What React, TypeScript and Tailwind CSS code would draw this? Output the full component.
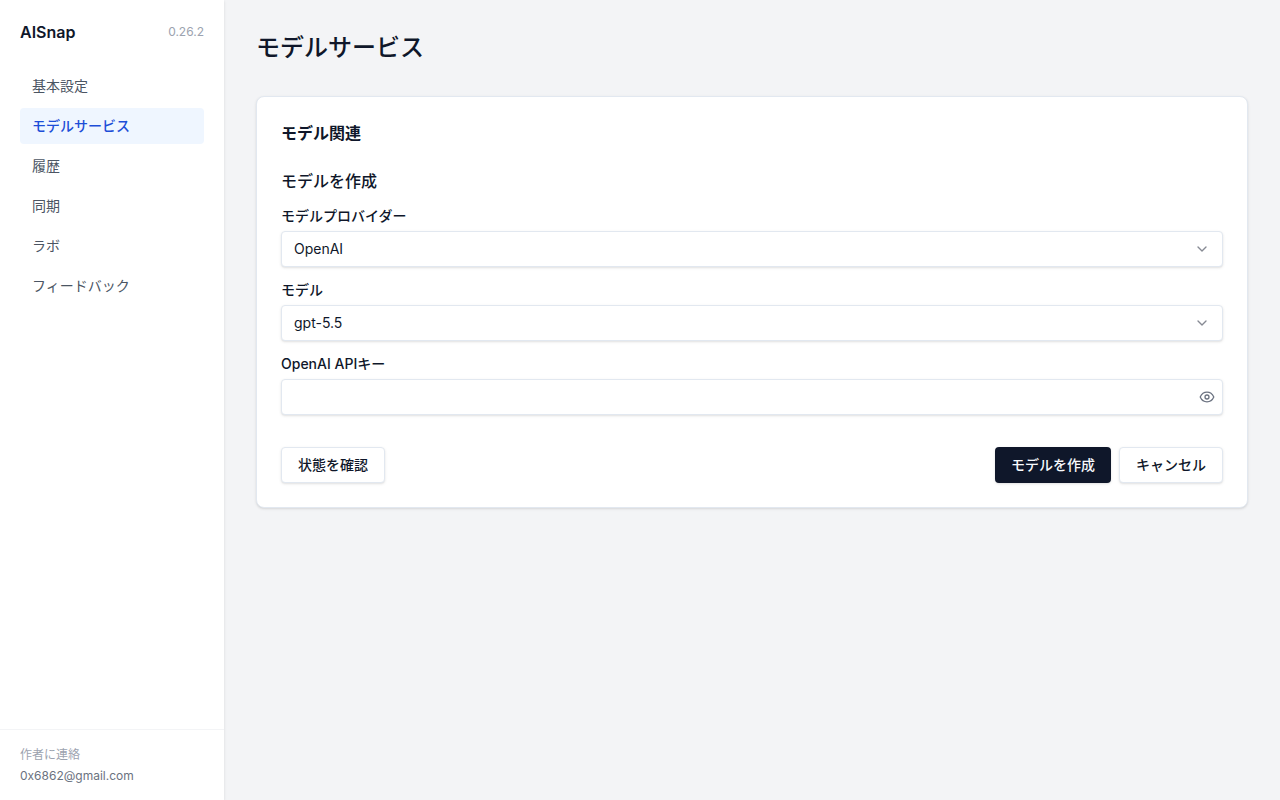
import React, { useState } from 'react';
import { ChevronDown } from 'lucide-react';

interface NavItem {
  id: string;
  label: string;
}

const NAV_ITEMS: NavItem[] = [
  { id: 'general', label: '基本設定' },
  { id: 'models', label: 'モデルサービス' },
  { id: 'history', label: '履歴' },
  { id: 'sync', label: '同期' },
  { id: 'lab', label: 'ラボ' },
  { id: 'feedback', label: 'フィードバック' },
];

const PROVIDERS: Record<string, string[]> = {
  OpenAI: ['gpt-5.5'],
};

interface SelectFieldProps {
  id: string;
  label: string;
  value: string;
  options: string[];
  onChange: (value: string) => void;
}

const SelectField: React.FC<SelectFieldProps> = ({ id, label, value, options, onChange }) => (
  <div className="flex flex-col gap-2">
    <label htmlFor={id} className="text-sm leading-none font-medium">{label}</label>
    <div className="relative">
      <select
        id={id}
        value={value}
        onChange={e => onChange(e.target.value)}
        className="block h-9 w-full appearance-none rounded border border-[#e2e8f0] bg-white px-3 text-sm shadow-sm"
      >
        {options.map(option => (
          <option key={option} value={option}>{option}</option>
        ))}
      </select>
      <ChevronDown size={16} className="pointer-events-none absolute inset-y-0 right-[13px] my-auto opacity-50" />
    </div>
  </div>
);

const EyeIcon: React.FC<{ crossed: boolean }> = ({ crossed }) => (
  <svg width="16" height="16" viewBox="0 0 16 16" fill="none" stroke="currentColor" strokeWidth="1.3" strokeLinecap="round" strokeLinejoin="round">
    <path d="M1.2 8C2.6 4.9 5 3.2 8 3.2S13.4 4.9 14.8 8C13.4 11.1 11 12.8 8 12.8S2.6 11.1 1.2 8Z" />
    <circle cx="8" cy="8" r="2" />
    {crossed && <path d="M2.5 2.5l11 11" />}
  </svg>
);

const OutlineButton: React.FC<{ children: React.ReactNode }> = ({ children }) => (
  <button type="button" className="h-9 rounded border border-[#e2e8f0] bg-white px-4 text-sm font-medium shadow-sm hover:bg-[#f1f5f9]">
    {children}
  </button>
);

const Sidebar: React.FC = () => {
  const [active, setActive] = useState('models');

  return (
    <aside className="flex w-56 shrink-0 flex-col bg-white shadow-sm">
      <div className="flex h-16 items-center justify-between px-5">
        <h1 className="text-base font-semibold">AISnap</h1>
        <span className="text-xs text-[#9ca3af]">0.26.2</span>
      </div>
      <nav className="flex flex-1 flex-col gap-1 px-5 pt-1">
        {NAV_ITEMS.map(item => (
          <a
            key={item.id}
            href={`#${item.id}`}
            onClick={() => setActive(item.id)}
            className={`rounded px-3 py-2 text-sm ${active === item.id ? 'bg-[#eff6ff] font-medium text-[#1d4ed8]' : 'text-[#4b5563] hover:bg-[#f9fafb]'}`}
          >
            {item.label}
          </a>
        ))}
      </nav>
      <div className="flex flex-col gap-1 border-t border-[#f3f4f6] px-5 py-4 text-xs leading-[17px]">
        <span className="text-[#9ca3af]">作者に連絡</span>
        <a href="mailto:0x6862@gmail.com" className="text-[#6b7280]">0x6862@gmail.com</a>
      </div>
    </aside>
  );
};

const ModelForm: React.FC = () => {
  const [provider, setProvider] = useState('OpenAI');
  const [model, setModel] = useState('gpt-5.5');
  const [apiKey, setApiKey] = useState('');
  const [visible, setVisible] = useState(false);

  return (
    <form onSubmit={e => e.preventDefault()} className="flex flex-col gap-4">
      <h4 className="text-base font-medium">モデルを作成</h4>
      <SelectField id="provider" label="モデルプロバイダー" value={provider} options={Object.keys(PROVIDERS)} onChange={setProvider} />
      <SelectField id="model" label="モデル" value={model} options={PROVIDERS[provider]} onChange={setModel} />
      <div className="flex flex-col gap-2">
        <label htmlFor="api-key" className="text-sm leading-none font-medium">OpenAI APIキー</label>
        <div className="relative">
          <input
            id="api-key"
            type={visible ? 'text' : 'password'}
            value={apiKey}
            onChange={e => setApiKey(e.target.value)}
            className="block h-9 w-full rounded border border-[#e2e8f0] bg-white pr-9 pl-3 text-sm shadow-sm"
          />
          <button
            type="button"
            aria-label="APIキーを表示"
            onClick={() => setVisible(!visible)}
            className="absolute inset-y-0 right-2 flex items-center text-[#6b7280]"
          >
            <EyeIcon crossed={visible} />
          </button>
        </div>
      </div>
      <div className="mt-4 flex justify-between">
        <OutlineButton>状態を確認</OutlineButton>
        <div className="flex gap-2">
          <button type="submit" className="h-9 rounded bg-[#0f172a] px-4 text-sm font-medium text-[#f8fafc] shadow-sm hover:bg-[#1e293b]">
            モデルを作成
          </button>
          <OutlineButton>キャンセル</OutlineButton>
        </div>
      </div>
    </form>
  );
};

export default function App() {
  return (
    <div className="flex min-h-screen bg-[#f3f4f6] font-['Inter','Noto_Sans_CJK_JP',sans-serif] text-[#0f172a]">
      <Sidebar />
      <main className="min-w-0 flex-1 p-8">
        <h2 className="mb-8 text-2xl font-medium">モデルサービス</h2>
        <section className="rounded-lg border border-[#e2e8f0] bg-white p-6 shadow-sm">
          <h3 className="mb-6 text-base font-semibold">モデル関連</h3>
          <ModelForm />
        </section>
      </main>
    </div>
  );
}
